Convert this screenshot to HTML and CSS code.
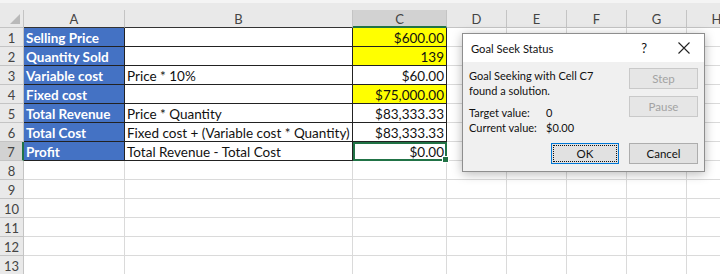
FILE: index.html
```html
<!DOCTYPE html>
<html lang="en">
<head>
  <meta charset="UTF-8" />
  <title>Goal Seek</title>
  <link rel="stylesheet" href="styles.css">
</head>
<body>
  <div class="app">
    <div class="topbar"></div>
    <div class="sheet" id="sheet"></div>

    <div class="dialog">
      <div class="dialog-title">
        <span class="title-text">Goal Seek Status</span>
        <span class="help">?</span>
        <svg class="close" width="12" height="12" viewBox="0 0 12 12">
          <path d="M0.5 0.5 L11.5 11.5 M11.5 0.5 L0.5 11.5" stroke="#222" stroke-width="1.1" fill="none"/>
        </svg>
      </div>
      <div class="dialog-body">
        <div class="dialog-main">
          <div class="msg">
            <p>Goal Seeking with Cell C7<br>found a solution.</p>
            <div class="values">
              <span>Target value:</span><span>0</span>
              <span>Current value:</span><span>$0.00</span>
            </div>
          </div>
          <div class="side-btns">
            <button class="btn" disabled>Step</button>
            <button class="btn" disabled>Pause</button>
          </div>
        </div>
        <div class="dialog-footer">
          <button class="btn primary"><span>OK</span></button>
          <button class="btn">Cancel</button>
        </div>
      </div>
    </div>
  </div>

  <script>
    const cols = ["A", "B", "C", "D", "E", "F", "G", "H"];
    const rows = [
      ["Selling Price", "", "$600.00", true],
      ["Quantity Sold", "", "139", true],
      ["Variable cost", "Price * 10%", "$60.00"],
      ["Fixed cost", "", "$75,000.00", true],
      ["Total Revenue", "Price * Quantity", "$83,333.33"],
      ["Total Cost", "Fixed cost + (Variable cost * Quantity)", "$83,333.33"],
      ["Profit", "Total Revenue - Total Cost", "$0.00"]
    ];

    const sheet = document.getElementById("sheet");

    function addCell(cls, text) {
      const el = document.createElement("div");
      el.className = "cell " + cls;
      el.textContent = text || "";
      sheet.appendChild(el);
      return el;
    }

    addCell("corner");
    cols.forEach(c => addCell("colhead" + (c === "C" ? " sel" : "") + (c <= "C" ? " top" : ""), c));

    for (let r = 1; r <= 13; r++) {
      addCell("rowhead" + (r === 7 ? " sel" : ""), r);
      const data = rows[r - 1];
      cols.forEach((c, i) => {
        if (data && i < 3) {
          let cls = "data";
          if (i === 0) cls += " label";
          if (i === 2) cls += " num";
          if (i === 2 && data[3]) cls += " yellow";
          if (i === 2 && r === 7) cls += " active";
          addCell(cls, data[i]);
        } else {
          addCell("", "");
        }
      });
    }
  </script>
</body>
</html>
```

FILE: styles.css
```css
body {
  margin: 0;
  background: #fff;
  font-family: Lato, 'Liberation Sans', sans-serif;
}

.app {
  position: relative;
  width: 720px;
  height: 274px;
  overflow: hidden;
}

.topbar {
  height: 10px;
  box-sizing: border-box;
  background: #e9e9e9;
  border-top: 3px solid #f4f4f4;
}

.sheet {
  display: grid;
  grid-template-columns: 24px 101px 228px 94px 60px 60px 60px 60px 60px;
  grid-template-rows: 18px;
  grid-auto-rows: 19px;
}

.cell {
  box-sizing: border-box;
  border-right: 1px solid #dadada;
  border-bottom: 1px solid #dadada;
  padding: 0 2px;
  font-size: 13.5px;
  line-height: 20px;
  color: #111;
  white-space: nowrap;
  overflow: hidden;
}

.corner,
.colhead,
.rowhead {
  background: #e9e9e9;
  border-color: #c4c4c4;
  color: #444;
  text-align: center;
  font-size: 13px;
}

.colhead {
  line-height: 18px;
}

.colhead.top {
  border-bottom-color: #333;
}

.corner {
  position: relative;
}

.corner::after {
  content: "";
  position: absolute;
  right: 3px;
  bottom: 3px;
  border-left: 10px solid transparent;
  border-bottom: 10px solid #b9b9b9;
}

.sel {
  background: #d2d2d2;
}

.colhead.sel {
  border-bottom: 2px solid #217346;
}

.rowhead.sel {
  border-right: 2px solid #217346;
}

.data {
  border-right-color: #222;
  border-bottom-color: #222;
}

.label {
  background: #4472c4;
  color: #fff;
  font-weight: bold;
  border-right-color: #222;
}

.num {
  text-align: right;
}

.yellow {
  background: #ffff00;
}

.active {
  position: relative;
  overflow: visible;
  outline: 2px solid #217346;
  outline-offset: -2px;
}

.active::after {
  content: "";
  position: absolute;
  right: -3px;
  bottom: -3px;
  width: 5px;
  height: 5px;
  background: #217346;
  border: 1px solid #fff;
}

/* dialog */
.dialog {
  position: absolute;
  left: 462px;
  top: 33px;
  width: 243px;
  height: 139px;
  box-sizing: border-box;
  background: #f0f0f0;
  border: 1px solid #8e8e8e;
  box-shadow: 0 2px 10px rgba(0, 0, 0, 0.28);
  font-size: 11px;
  color: #111;
}

.dialog-title {
  display: flex;
  align-items: center;
  height: 28px;
  padding: 0 14px 0 8px;
  background: #fff;
  font-size: 11.2px;
}

.title-text {
  flex: 1;
}

.help {
  margin-right: 31px;
  font-size: 13px;
}

.dialog-body {
  padding: 6px 6px 0 6px;
}

.dialog-main {
  display: flex;
  justify-content: space-between;
}

.msg p {
  margin: 0;
  line-height: 15px;
}

.values {
  display: grid;
  grid-template-columns: 77px auto;
  margin-top: 7px;
  line-height: 15px;
}

.side-btns {
  display: flex;
  flex-direction: column;
  gap: 7px;
}

.btn {
  box-sizing: border-box;
  width: 69px;
  height: 21px;
  padding: 0;
  background: #e1e1e1;
  border: 1px solid #adadad;
  font-family: inherit;
  font-size: 11.5px;
  color: #111;
}

.btn:disabled {
  background: #e6e6e6;
  border-color: #c9c9c9;
  color: #a3a3a3;
}

.dialog-footer {
  display: flex;
  justify-content: flex-end;
  gap: 10px;
  margin-top: 8px;
}

.btn.primary {
  width: 68px;
  border: 1px solid #0078d7;
  padding: 1px;
}

.btn.primary span {
  display: block;
  height: 100%;
  box-sizing: border-box;
  border: 1px dotted #111;
  line-height: 15px;
}
```
